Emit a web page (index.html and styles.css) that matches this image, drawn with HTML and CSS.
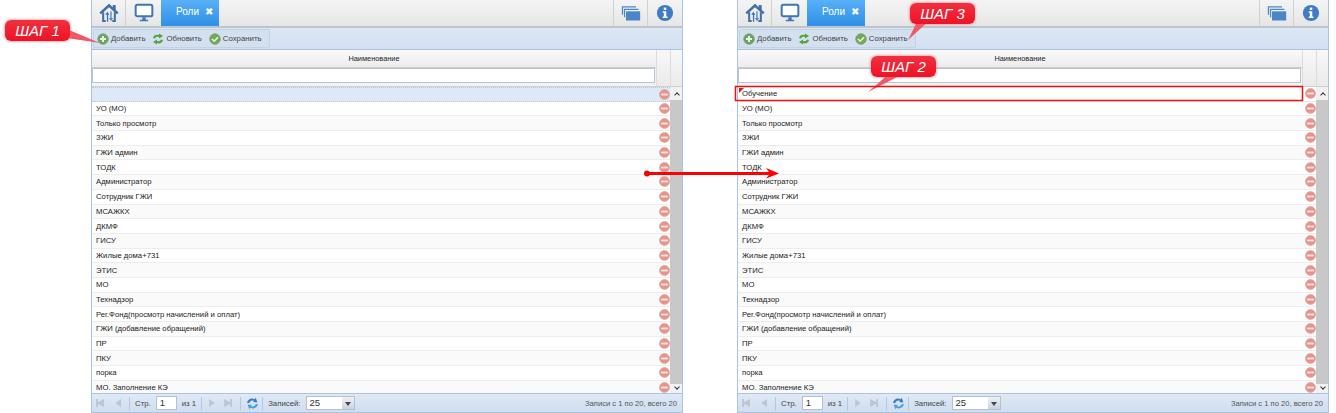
FILE: index.html
```html
<!DOCTYPE html>
<html lang="en">
<head>
    <meta charset="UTF-8">
    <title>Роли</title>
    <link rel="stylesheet" href="styles.css">
</head>
<body>
<svg class="defs" width="0" height="0">
    <symbol id="i-home" viewBox="0 0 24 24">
        <rect x="16.500" y="2.500" width="3.500" height="6" fill="#3d6fa8"/>
        <path d="M1.500 12.500 L12 3 L22.500 12.500" fill="none" stroke="#3d6fa8" stroke-width="3"/>
        <path d="M5 11 V21.500 H8 M19 11 V21.500 H16" fill="none" stroke="#3d6fa8" stroke-width="2.400"/>
        <path d="M9.500 22.500 V14 H7.500 L10 10.500 L12.500 14 H11 V22.500 Z" fill="#3d6fa8"/>
        <path d="M13.500 10 V18 H11.800 L14.500 22 L17 18 H15.200 V10 Z" fill="#5a8cc4"/>
    </symbol>
    <symbol id="i-screen" viewBox="0 0 24 24">
        <rect x="2" y="2" width="20" height="14" rx="2" fill="#fff" stroke="#3f76b4" stroke-width="2.400"/>
        <path d="M10 17h4v3h3v2H7v-2h3z" fill="#3f76b4"/>
    </symbol>
    <symbol id="i-windows" viewBox="0 0 24 20">
        <path d="M1 2h17v1.500H2.500V12H1zM3.500 5H21v1.500H5V15H3.500z" fill="#4a86c8"/>
        <rect x="6" y="8" width="17" height="11" fill="#4a86c8"/>
    </symbol>
    <symbol id="i-info" viewBox="0 0 20 20">
        <circle cx="10" cy="10" r="9" fill="#3f7cc4"/>
        <rect x="8.600" y="4" width="2.800" height="2.600" fill="#fff"/>
        <path d="M7.500 8h3.900v6h1.300v1.600H7.500V14h1.200V9.600H7.500z" fill="#fff"/>
    </symbol>
    <symbol id="i-add" viewBox="0 0 12 12">
        <circle cx="6" cy="6" r="5.300" fill="#62a85a" stroke="#8a9a8a" stroke-width=".8"/>
        <path d="M5 3h2v2h2v2H7v2H5V7H3V5h2z" fill="#eef6e8"/>
    </symbol>
    <symbol id="i-refresh" viewBox="0 0 12 12">
        <path d="M1 5C1.500 2 4.500 1 7 2V.5L11 3 7 5.500V4C5 3.500 3.500 4 3 5.500z" fill="#54a23e"/>
        <path d="M11 7C10.500 10 7.500 11 5 10v1.500L1 9l4-2.500V8c2 .5 3.500 0 4-1.500z" fill="#54a23e"/>
    </symbol>
    <symbol id="i-save" viewBox="0 0 12 12">
        <circle cx="6" cy="6" r="5.300" fill="#6bae4f" stroke="#85967f" stroke-width=".8"/>
        <path d="M3 6l2.200 2.200L9 4.200" fill="none" stroke="#f2f8ec" stroke-width="1.500"/>
    </symbol>
    <symbol id="i-del" viewBox="0 0 12 12">
        <circle cx="6" cy="6" r="5.400" fill="#e8938a" stroke="#d3aaa6" stroke-width=".8"/>
        <rect x="2.300" y="5" width="7.400" height="2" fill="#f9e4e0"/>
    </symbol>
    <symbol id="i-sync" viewBox="0 0 12 12">
        <path d="M1 5.500C1.500 2 5 .5 8 2l1-1.200L10.500 5 6.500 4.600l1-1.100C5.500 2.700 3.500 3.500 3 5.500z" fill="#2f7fc8"/>
        <path d="M11 6.500C10.500 10 7 11.500 4 10l-1 1.200L1.500 7l4 .4-1 1.100c2 .8 4 0 4.500-2z" fill="#4a9ee0"/>
    </symbol>
</svg>

<div class="page">
    <!-- left: empty new row -->
    <div class="panel">
        <div class="tabs">
            <div class="tab-btn"><svg class="ic-big"><use href="#i-home"/></svg></div>
            <div class="tab-btn"><svg class="ic-big"><use href="#i-screen"/></svg></div>
            <div class="tab-active">Роли <span class="tab-x">&#10006;</span></div>
            <div class="tab-spacer"></div>
            <div class="tab-btn tab-right"><svg class="ic-big"><use href="#i-windows"/></svg></div>
            <div class="tab-btn tab-last"><svg class="ic-info"><use href="#i-info"/></svg></div>
        </div>
        <div class="toolbar">
            <div class="tool-group">
                <span class="tool"><svg class="ic"><use href="#i-add"/></svg>Добавить</span>
                <span class="tool"><svg class="ic"><use href="#i-refresh"/></svg>Обновить</span>
                <span class="tool"><svg class="ic"><use href="#i-save"/></svg>Сохранить</span>
            </div>
        </div>
        <div class="head">
            <div class="head-main">
                <div class="head-title">Наименование</div>
                <div class="filter"><div class="filter-input"></div></div>
            </div>
            <div class="head-del"></div>
            <div class="head-scroll"></div>
        </div>
        <div class="body">
            <div class="rows">
                <div class="row row-new"><span class="name"></span><svg class="ic-del"><use href="#i-del"/></svg></div>
                <div class="row"><span class="name">УО (МО)</span><svg class="ic-del"><use href="#i-del"/></svg></div>
                <div class="row"><span class="name">Только просмотр</span><svg class="ic-del"><use href="#i-del"/></svg></div>
                <div class="row"><span class="name">ЗЖИ</span><svg class="ic-del"><use href="#i-del"/></svg></div>
                <div class="row"><span class="name">ГЖИ админ</span><svg class="ic-del"><use href="#i-del"/></svg></div>
                <div class="row"><span class="name">ТОДК</span><svg class="ic-del"><use href="#i-del"/></svg></div>
                <div class="row"><span class="name">Администратор</span><svg class="ic-del"><use href="#i-del"/></svg></div>
                <div class="row"><span class="name">Сотрудник ГЖИ</span><svg class="ic-del"><use href="#i-del"/></svg></div>
                <div class="row"><span class="name">МСАЖКХ</span><svg class="ic-del"><use href="#i-del"/></svg></div>
                <div class="row"><span class="name">ДКМФ</span><svg class="ic-del"><use href="#i-del"/></svg></div>
                <div class="row"><span class="name">ГИСУ</span><svg class="ic-del"><use href="#i-del"/></svg></div>
                <div class="row"><span class="name">Жилые дома+731</span><svg class="ic-del"><use href="#i-del"/></svg></div>
                <div class="row"><span class="name">ЭТИС</span><svg class="ic-del"><use href="#i-del"/></svg></div>
                <div class="row"><span class="name">МО</span><svg class="ic-del"><use href="#i-del"/></svg></div>
                <div class="row"><span class="name">Технадзор</span><svg class="ic-del"><use href="#i-del"/></svg></div>
                <div class="row"><span class="name">Рег.Фонд(просмотр начислений и оплат)</span><svg class="ic-del"><use href="#i-del"/></svg></div>
                <div class="row"><span class="name">ГЖИ (добавление обращений)</span><svg class="ic-del"><use href="#i-del"/></svg></div>
                <div class="row"><span class="name">ПР</span><svg class="ic-del"><use href="#i-del"/></svg></div>
                <div class="row"><span class="name">ПКУ</span><svg class="ic-del"><use href="#i-del"/></svg></div>
                <div class="row"><span class="name">порка</span><svg class="ic-del"><use href="#i-del"/></svg></div>
                <div class="row"><span class="name">МО. Заполнение КЭ</span><svg class="ic-del"><use href="#i-del"/></svg></div>
            </div>
            <div class="scrollbar">
                <div class="scroll-btn scroll-up"></div>
                <div class="scroll-thumb"></div>
                <div class="scroll-btn scroll-down"></div>
            </div>
        </div>
        <div class="pager">
            <span class="pg-arrow pg-first"></span>
            <span class="pg-arrow pg-prev"></span>
            <span class="pg-sep"></span>
            <span class="pg-text">Стр.</span>
            <span class="pg-input">1</span>
            <span class="pg-text">из 1</span>
            <span class="pg-sep"></span>
            <span class="pg-arrow pg-next"></span>
            <span class="pg-arrow pg-last"></span>
            <span class="pg-sep"></span>
            <svg class="ic-sync"><use href="#i-sync"/></svg>
            <span class="pg-sep"></span>
            <span class="pg-text">Записей:</span>
            <span class="pg-select"><span class="pg-select-val">25</span><span class="pg-select-btn"></span></span>
            <span class="pg-info">Записи с 1 по 20, всего 20</span>
        </div>
    </div>

    <!-- right: row filled in -->
    <div class="panel">
        <div class="tabs">
            <div class="tab-btn"><svg class="ic-big"><use href="#i-home"/></svg></div>
            <div class="tab-btn"><svg class="ic-big"><use href="#i-screen"/></svg></div>
            <div class="tab-active">Роли <span class="tab-x">&#10006;</span></div>
            <div class="tab-spacer"></div>
            <div class="tab-btn tab-right"><svg class="ic-big"><use href="#i-windows"/></svg></div>
            <div class="tab-btn tab-last"><svg class="ic-info"><use href="#i-info"/></svg></div>
        </div>
        <div class="toolbar">
            <div class="tool-group">
                <span class="tool"><svg class="ic"><use href="#i-add"/></svg>Добавить</span>
                <span class="tool"><svg class="ic"><use href="#i-refresh"/></svg>Обновить</span>
                <span class="tool"><svg class="ic"><use href="#i-save"/></svg>Сохранить</span>
            </div>
        </div>
        <div class="head">
            <div class="head-main">
                <div class="head-title">Наименование</div>
                <div class="filter"><div class="filter-input"></div></div>
            </div>
            <div class="head-del"></div>
            <div class="head-scroll"></div>
        </div>
        <div class="body">
            <div class="rows">
                <div class="row row-edit"><span class="name">Обучение</span><svg class="ic-del"><use href="#i-del"/></svg></div>
                <div class="row"><span class="name">УО (МО)</span><svg class="ic-del"><use href="#i-del"/></svg></div>
                <div class="row"><span class="name">Только просмотр</span><svg class="ic-del"><use href="#i-del"/></svg></div>
                <div class="row"><span class="name">ЗЖИ</span><svg class="ic-del"><use href="#i-del"/></svg></div>
                <div class="row"><span class="name">ГЖИ админ</span><svg class="ic-del"><use href="#i-del"/></svg></div>
                <div class="row"><span class="name">ТОДК</span><svg class="ic-del"><use href="#i-del"/></svg></div>
                <div class="row"><span class="name">Администратор</span><svg class="ic-del"><use href="#i-del"/></svg></div>
                <div class="row"><span class="name">Сотрудник ГЖИ</span><svg class="ic-del"><use href="#i-del"/></svg></div>
                <div class="row"><span class="name">МСАЖКХ</span><svg class="ic-del"><use href="#i-del"/></svg></div>
                <div class="row"><span class="name">ДКМФ</span><svg class="ic-del"><use href="#i-del"/></svg></div>
                <div class="row"><span class="name">ГИСУ</span><svg class="ic-del"><use href="#i-del"/></svg></div>
                <div class="row"><span class="name">Жилые дома+731</span><svg class="ic-del"><use href="#i-del"/></svg></div>
                <div class="row"><span class="name">ЭТИС</span><svg class="ic-del"><use href="#i-del"/></svg></div>
                <div class="row"><span class="name">МО</span><svg class="ic-del"><use href="#i-del"/></svg></div>
                <div class="row"><span class="name">Технадзор</span><svg class="ic-del"><use href="#i-del"/></svg></div>
                <div class="row"><span class="name">Рег.Фонд(просмотр начислений и оплат)</span><svg class="ic-del"><use href="#i-del"/></svg></div>
                <div class="row"><span class="name">ГЖИ (добавление обращений)</span><svg class="ic-del"><use href="#i-del"/></svg></div>
                <div class="row"><span class="name">ПР</span><svg class="ic-del"><use href="#i-del"/></svg></div>
                <div class="row"><span class="name">ПКУ</span><svg class="ic-del"><use href="#i-del"/></svg></div>
                <div class="row"><span class="name">порка</span><svg class="ic-del"><use href="#i-del"/></svg></div>
                <div class="row"><span class="name">МО. Заполнение КЭ</span><svg class="ic-del"><use href="#i-del"/></svg></div>
            </div>
            <div class="scrollbar">
                <div class="scroll-btn scroll-up"></div>
                <div class="scroll-thumb"></div>
                <div class="scroll-btn scroll-down"></div>
            </div>
        </div>
        <div class="pager">
            <span class="pg-arrow pg-first"></span>
            <span class="pg-arrow pg-prev"></span>
            <span class="pg-sep"></span>
            <span class="pg-text">Стр.</span>
            <span class="pg-input">1</span>
            <span class="pg-text">из 1</span>
            <span class="pg-sep"></span>
            <span class="pg-arrow pg-next"></span>
            <span class="pg-arrow pg-last"></span>
            <span class="pg-sep"></span>
            <svg class="ic-sync"><use href="#i-sync"/></svg>
            <span class="pg-sep"></span>
            <span class="pg-text">Записей:</span>
            <span class="pg-select"><span class="pg-select-val">25</span><span class="pg-select-btn"></span></span>
            <span class="pg-info">Записи с 1 по 20, всего 20</span>
        </div>
    </div>
</div>

<!-- annotations drawn on top of the screenshot -->
<svg class="marks" width="1336" height="413">
    <path d="M62 27 L100 43 L60 37 Z" fill="#ee5a66"/>
    <path d="M918 20 L908 40 L930 20 Z" fill="#ee5a66"/>
    <path d="M890 73 L868 92 L905 73 Z" fill="#ee5a66"/>
    <circle cx="647" cy="173.500" r="3" fill="#f00"/>
    <path d="M647 172H770V175H647Z" fill="#f00"/>
    <path d="M766 168 L779 173.500 L766 178.500 L770 173.500 Z" fill="#f00"/>
    <rect x="735.500" y="86.500" width="567" height="14" fill="none" stroke="#f01010" stroke-width="1.500"/>
</svg>
<div class="step step-1">ШАГ 1</div>
<div class="step step-2">ШАГ 2</div>
<div class="step step-3">ШАГ 3</div>
</body>
</html>
```

FILE: styles.css
```css
* {
    box-sizing: border-box;
}

body {
    margin: 0;
    background-color: #fff;
    font-family: "Liberation Sans", Arial, sans-serif;
    font-size: 7.8px;
    color: #333;
    overflow: hidden;
}

.defs {
    position: absolute;
}

.page {
    display: flex;
    gap: 54px;
    height: 413px;
    padding-left: 91px;
}

.panel {
    display: flex;
    flex-direction: column;
    width: 592px;
    height: 413px;
    border-left: 1px solid #a9c3e3;
    border-right: 1px solid #a9c3e3;
}

.tabs {
    display: flex;
    height: 28px;
    background: linear-gradient(#f4f4f4, #e6e6e6);
    border-bottom: 2px solid #bcc5cd;
}

.tab-btn {
    display: flex;
    align-items: center;
    justify-content: center;
    width: 34px;
    border-right: 1px solid #d0d0d0;
}

.tab-btn:nth-child(2) {
    width: 35px;
    border-right: none;
}

.tab-right {
    width: 35px;
    border-left: 1px solid #d0d0d0;
    border-right: 1px solid #d0d0d0;
}

.tab-last {
    width: 34px;
    border-right: none;
}

.ic-big {
    width: 20px;
    height: 20px;
}

.ic-info {
    width: 18px;
    height: 18px;
}

.tab-active {
    width: 58px;
    padding: 6px 0 0 15px;
    background: linear-gradient(#58b0f6, #2f90e8);
    color: #fff;
    font-size: 10px;
}

.tab-x {
    margin-left: 3px;
    font-size: 10px;
}

.tab-spacer {
    flex: 1;
}

.toolbar {
    height: 22px;
    padding-top: 1px;
    background: linear-gradient(#dde7f4, #d3e0f1);
    border-bottom: 1px solid #a9c3e3;
}

.tool-group {
    display: inline-flex;
    gap: 7px;
    height: 19px;
    align-items: center;
    padding: 0 7px 0 3px;
    margin-left: 1px;
    background: #d3e0ef;
    border: 1px solid #c4d2e4;
    border-radius: 2px;
}

.tool {
    display: inline-flex;
    align-items: center;
    gap: 2px;
    color: #444;
}

.ic {
    width: 12px;
    height: 12px;
}

.head {
    display: flex;
    height: 37px;
    border-bottom: 1px solid #d0d0d0;
    background: #f3f3f3;
}

.head-main {
    flex: 1;
    min-width: 0;
}

.head-title {
    height: 17px;
    padding-top: 4px;
    font-size: 7.4px;
    text-align: center;
    color: #222;
    background: linear-gradient(#fafafa, #ececec);
}

.filter {
    height: 19px;
    padding-bottom: 2px;
    border-top: 1px solid #ccc;
}

.filter-input {
    height: 15px;
    margin-right: 1px;
    background: #fff;
    border: 1px solid #b9c4d2;
}

.head-del {
    width: 14px;
    border-left: 1px solid #dcdcdc;
    background: linear-gradient(#f8f8f8, #eaeaea);
}

.head-scroll {
    width: 12px;
    border-left: 1px solid #dcdcdc;
    background: linear-gradient(#f8f8f8, #eaeaea);
}

.body {
    display: flex;
    flex: 1;
    min-height: 0;
    overflow: hidden;
}

.rows {
    flex: 1;
    min-width: 0;
}

.row {
    display: flex;
    align-items: center;
    height: 14.7px;
    padding-left: 4px;
    border-bottom: 1px solid #ededed;
    color: #222;
    font-size: 7.7px;
}

.row:nth-child(odd) {
    background: #fafafa;
}

.row-new {
    background: #dfe8f6 !important;
    border-top: 1px dotted #b8c8de;
    border-bottom: 1px dotted #b8c8de;
}

.row-edit {
    position: relative;
    background: #fff !important;
}

.row-edit::before {
    content: "";
    position: absolute;
    left: 1px;
    top: 1px;
    border-top: 5px solid #d02020;
    border-right: 5px solid transparent;
}

.name {
    flex: 1;
    white-space: nowrap;
}

.ic-del {
    width: 11px;
    height: 11px;
    margin-right: 1px;
    transform: translateX(1px);
    flex: none;
}

.scrollbar {
    display: flex;
    flex-direction: column;
    width: 12px;
    background: #f1f1f1;
}

.scroll-btn {
    position: relative;
    height: 13px;
}

.scroll-up::before,
.scroll-down::before {
    content: "";
    position: absolute;
    left: 4.500px;
    width: 3px;
    height: 3px;
    border-left: 1px solid #333;
    border-top: 1px solid #333;
}

.scroll-up::before {
    top: 6px;
    transform: rotate(45deg);
}

.scroll-down {
    height: 9px;
}

.scroll-down::before {
    top: 1px;
    transform: rotate(225deg);
}

.scroll-thumb {
    flex: 1;
    background: #c8c8c8;
}

.pager {
    display: flex;
    align-items: center;
    height: 20px;
    padding: 0 5px 0 4px;
    gap: 5px;
    background: linear-gradient(#e0e9f5, #cfddef);
    border-top: 1px solid #a9c3e3;
    border-bottom: 1px solid #a9c3e3;
}

.pg-arrow {
    width: 8px;
    height: 8px;
    background: #bcc6d2;
    flex: none;
}

.pg-prev {
    margin-left: 4px;
}

.pg-next,
.pg-last {
    margin-left: 2px;
}

.pg-arrow + .pg-sep {
    margin-left: 3px;
}

.ic-sync + .pg-sep {
    margin-left: -2px;
}

.pg-first,
.pg-prev {
    clip-path: polygon(100% 0, 100% 100%, 30% 50%);
}

.pg-next,
.pg-last {
    clip-path: polygon(0 0, 0 100%, 70% 50%);
}

.pg-first {
    clip-path: polygon(0 0, 25% 0, 25% 40%, 100% 0, 100% 100%, 25% 60%, 25% 100%, 0 100%);
}

.pg-last {
    clip-path: polygon(0 0, 75% 40%, 75% 0, 100% 0, 100% 100%, 75% 100%, 75% 60%, 0 100%);
}

.pg-sep {
    width: 1px;
    height: 13px;
    background: #b3c7e0;
    flex: none;
}

.pg-text {
    color: #444;
    white-space: nowrap;
}

.pg-input {
    width: 21px;
    height: 14px;
    padding-left: 3px;
    background: #fff;
    border: 1px solid #b5c0cc;
    font-size: 9.5px;
    line-height: 12px;
    color: #333;
}

.pg-select {
    display: flex;
    width: 49px;
    height: 14px;
    background: #fff;
    border: 1px solid #b5c0cc;
}

.pg-select-val {
    flex: 1;
    padding-left: 3px;
    font-size: 9.5px;
    line-height: 12px;
}

.pg-select-btn {
    position: relative;
    width: 12px;
    background: linear-gradient(#eef1f5, #c9d3df);
}

.pg-select-btn::after {
    content: "";
    position: absolute;
    left: 3px;
    top: 5px;
    border-top: 4px solid #445;
    border-left: 3px solid transparent;
    border-right: 3px solid transparent;
}

.ic-sync {
    width: 13px;
    height: 13px;
    flex: none;
}

.pg-info {
    margin-left: auto;
    color: #555;
    font-size: 7.6px;
}

/* annotations */
.marks {
    position: absolute;
    left: 0;
    top: 0;
}

.step {
    position: absolute;
    width: 65px;
    height: 21px;
    border-radius: 6px;
    background: linear-gradient(#f0303e, #ee1226);
    box-shadow: 0 0 3px #f06070;
    color: #fff;
    font-size: 15px;
    font-style: italic;
    line-height: 21px;
    text-align: center;
}

.step-1 {
    left: 5px;
    top: 20px;
}

.step-2 {
    left: 871px;
    top: 56px;
}

.step-3 {
    left: 910px;
    top: 3px;
}
```
